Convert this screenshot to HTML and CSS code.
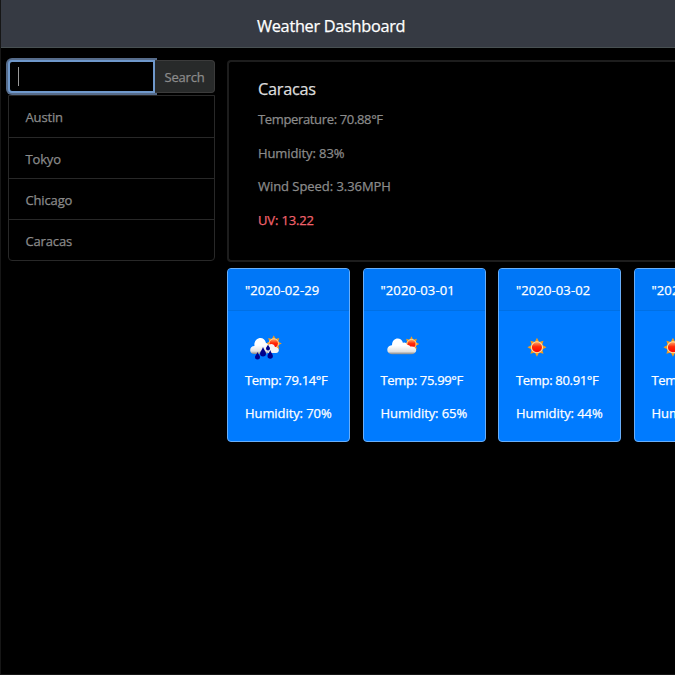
FILE: index.html
```html
<!DOCTYPE html>
<html lang="en">
<head>
<meta charset="utf-8">
<title>Weather Dashboard</title>
<link rel="stylesheet" href="styles.css">
</head>
<body>
<svg class="defs" aria-hidden="true">
  <defs>
    <linearGradient id="cloudFill" x1="0" y1="0" x2="0" y2="1">
      <stop offset="0.45" stop-color="#fff"/><stop offset="0.82" stop-color="#e2e2e2"/><stop offset="1" stop-color="#858585"/>
    </linearGradient>
    <linearGradient id="sunFill" x1="0" y1="0" x2="0" y2="1">
      <stop offset="0" stop-color="#ffb06a"/><stop offset="0.45" stop-color="#ff2a08"/><stop offset="1" stop-color="#f00"/>
    </linearGradient>
    <symbol id="sun" viewBox="-10 -10 20 20">
      <path fill="#f59a1b" d="M0-9.8 2.2-5.4 6.7-6.7 5.4-2.2 9.8 0 5.4 2.2 6.7 6.7 2.2 5.4 0 9.8-2.2 5.4-6.7 6.7-5.4 2.2-9.8 0-5.4-2.2-6.7-6.7-2.2-5.4Z"/>
      <circle r="5.7" fill="url(#sunFill)" stroke="#ffe0a0" stroke-width="1.1"/>
    </symbol>
  </defs>
</svg>
<header class="navbar"><h1 class="title">Weather Dashboard</h1></header>
<div class="layout">
  <aside class="sidebar">
    <div class="search">
      <div class="field"><span class="caret"></span></div>
      <button class="search-button">Search</button>
    </div>
    <ul class="cities">
      <li>Austin</li><li>Tokyo</li><li>Chicago</li><li>Caracas</li>
    </ul>
  </aside>
  <main class="main">
    <section class="current">
      <h2>Caracas</h2>
      <p class="temp">Temperature: 70.88°F</p>
      <p class="hum">Humidity: 83%</p>
      <p class="wind">Wind Speed: 3.36MPH</p>
      <p class="uv">UV: 13.22</p>
    </section>
    <section class="forecast">
      <article class="card">
        <div class="date">"2020-02-29</div>
        <div class="card-body">
          <svg class="icon" viewBox="0 0 42 42">
            <use href="#sun" x="20.5" y="8.2" width="16.5" height="16.5"/>
            <path fill="#f3f3f3" d="M19 26C16 24 18 19 22 20C24 16 29 16 30 20C35 20 35 26 31 26Z"/>
            <path fill="url(#cloudFill)" d="M9.500 27C3.500 27 4 19 9.500 19C8 11 19 7.500 21 16C26 17 26 27 20 27Z"/>
            <path fill="#00008c" d="M12.500 25C11.500 27.500 10 28.500 10 30A2.500 2.500 0 0 0 15 30C15 28.500 13.500 27.500 12.500 25M18 20C17 23 15 24.500 15 26.500A3 3 0 0 0 21 26.500C21 24.500 19 23 18 20M25.200 23C24.200 26 22.500 27 22.500 29A2.700 2.700 0 0 0 27.900 29C27.900 27 26.200 26 25.200 23M23 17.500C22.300 19.500 21 20 21 21.500A2 2 0 0 0 25 21.500C25 20 23.700 19.500 23 17.500"/>
          </svg>
          <p class="card-temp">Temp: 79.14°F</p>
          <p class="card-hum">Humidity: 70%</p>
        </div>
      </article>
      <article class="card">
        <div class="date">"2020-03-01</div>
        <div class="card-body">
          <svg class="icon" viewBox="0 0 42 42">
            <use href="#sun" x="22.500" y="9" width="16" height="16"/>
            <path fill="url(#cloudFill)" d="M11 27.300C4.500 27.300 5 18 11 18.300C11 10 20.500 9.500 22 16C23.500 14.800 26 16 26 18C29 17.500 29 20 30 19.500C37 19 37 27.300 30 27.300Z"/>
          </svg>
          <p class="card-temp">Temp: 75.99°F</p>
          <p class="card-hum">Humidity: 65%</p>
        </div>
      </article>
      <article class="card">
        <div class="date">"2020-03-02</div>
        <div class="card-body">
          <svg class="icon" viewBox="0 0 42 42"><use href="#sun" x="11.200" y="10.500" width="19.500" height="19.500"/></svg>
          <p class="card-temp">Temp: 80.91°F</p>
          <p class="card-hum">Humidity: 44%</p>
        </div>
      </article>
      <article class="card">
        <div class="date">"2020-03-03</div>
        <div class="card-body">
          <svg class="icon" viewBox="0 0 42 42"><use href="#sun" x="11.200" y="10.500" width="19.500" height="19.500"/></svg>
          <p class="card-temp">Temp: 80.91°F</p>
          <p class="card-hum">Humidity: 44%</p>
        </div>
      </article>
    </section>
  </main>
</div>
</body>
</html>
```
FILE: styles.css
```css
* { box-sizing: border-box; }
body {
  margin: 0;
  height: 675px;
  overflow: hidden;
  background: #000;
  border-left: 1px solid #161616;
  border-bottom: 1px solid #161616;
  color: #8b8b8b;
  font: 13px/20px "Open Sans", "Noto Sans", sans-serif;
  -webkit-text-stroke: 0.25px currentColor;
}
h1, h2, p, ul { margin: 0; padding: 0; font-weight: 400; }
.defs { position: absolute; width: 0; height: 0; }
.navbar {
  height: 48px;
  margin-left: -1px;
  padding: 14px 0 0 257px;
  background: #363a43;
  border-bottom: 1px solid #485052;
}
.title { font-size: 16.300px; line-height: 24px; letter-spacing: -0.28px; color: #fff; white-space: nowrap; }
.layout { display: flex; gap: 12px; padding: 12px 0 0 7px; }
.sidebar { flex: 0 0 207px; }
.search { display: flex; height: 33px; }
.field {
  width: 147px;
  height: 33px;
  padding: 5px 0 0 8px;
  background: #000;
  border: 2px solid #6f98cb;
  border-radius: 4px 0 0 4px;
  box-shadow: 0 0 0 2px #566c8b;
}
.caret { display: block; width: 1px; height: 19px; background: #999; }
.search-button {
  flex: 1;
  padding: 0;
  background: #282a2a;
  border: 1px solid #3b3b3b;
  border-left: 0;
  border-radius: 0 4px 4px 0;
  color: #8b8b8b;
  font: inherit;
  letter-spacing: -0.2px;
}
.cities { margin-top: 2px; list-style: none; border: 1px solid #282828; border-radius: 0 0 4px 4px; }
.cities li { height: 41px; padding: 11px 0 0 16.500px; letter-spacing: -0.15px; }
.cities li + li { border-top: 1px solid #282828; }
.main { flex: 1; min-width: 0; }
.current {
  height: 202px;
  padding: 16px 0 0 29px;
  border: 2px solid #1d1d1d;
  border-right: 0;
  border-radius: 4px 0 0 4px;
}
.current h2 { margin-bottom: 9px; font-size: 16.300px; line-height: 22px; letter-spacing: -0.25px; color: #ddd; }
.current p { margin-bottom: 13.700px; }
.current .temp { letter-spacing: -0.35px; }
.current .hum { letter-spacing: -0.1px; }
.current .wind { letter-spacing: -0.05px; }
.current .uv { letter-spacing: -0.15px; color: #f0626c; }
.forecast { display: flex; gap: 12.500px; margin-top: 6px; }
.card {
  flex: 0 0 123px;
  height: 174px;
  background: #007bff;
  border: 1px solid #69aef8;
  border-radius: 4px;
  color: #fff;
  overflow: hidden;
}
.date { height: 42px; padding: 11px 0 0 17px; background: #0077f7; border-bottom: 1px solid #0070e5; letter-spacing: 0.12px; }
.card-body { padding: 16px 0 0 17px; }
.icon { display: block; width: 42px; height: 42px; margin-bottom: 1px; }
.card p { height: 33px; white-space: nowrap; }
.card-temp { letter-spacing: -0.32px; }
.card-hum { letter-spacing: -0.08px; }
```
